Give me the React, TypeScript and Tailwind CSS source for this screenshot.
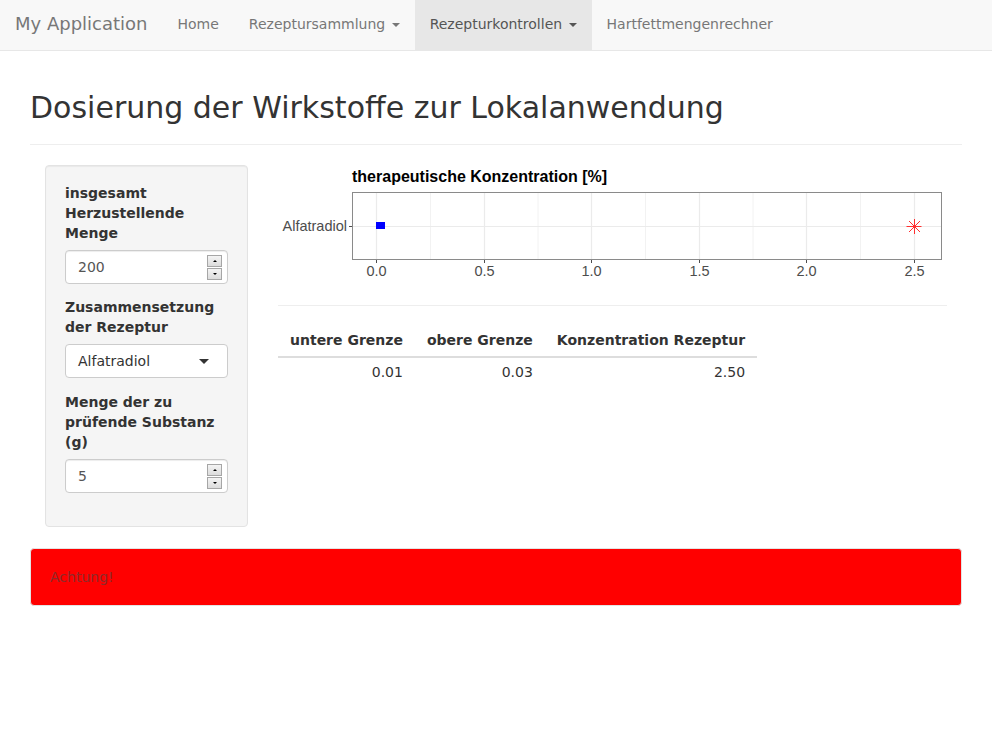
import React from "react";

function Caret() {
  return (
    <span className="inline-block w-0 h-0 ml-[2px] align-middle border-x-[4px] border-t-[4px] border-x-transparent border-t-current" />
  );
}

function Spinner() {
  return (
    <div className="absolute right-[5px] top-[4px] flex flex-col gap-[1px]">
      <div className="w-[15px] h-[12px] bg-gradient-to-b from-[#f4f4f4] to-[#dcdcdc] border border-[#a6a6a6] flex items-center justify-center">
        <span className="w-0 h-0 border-x-[2px] border-b-[2px] border-x-transparent border-b-black" />
      </div>
      <div className="w-[15px] h-[12px] bg-gradient-to-b from-[#f4f4f4] to-[#dcdcdc] border border-[#a6a6a6] flex items-center justify-center">
        <span className="w-0 h-0 border-x-[2px] border-t-[2px] border-x-transparent border-t-black" />
      </div>
    </div>
  );
}

function NumInput({ value }: { value: string }) {
  return (
    <div className="relative h-[34px] w-full bg-white border border-[#ccc] rounded-[4px] shadow-[inset_0_1px_1px_rgba(0,0,0,0.075)] px-[12px] flex items-center text-[#555]">
      {value}
      <Spinner />
    </div>
  );
}

function Chart() {
  const majors = [98, 206, 313, 421, 528, 636];
  const minors = [152, 259.5, 367, 474.5, 582];
  const labels = ["0.0", "0.5", "1.0", "1.5", "2.0", "2.5"];
  const font = "'Liberation Sans', Arial, sans-serif";
  return (
    <svg width="669" height="120" viewBox="0 0 669 120" className="block">
      <text x="74" y="17" fontFamily={font} fontWeight="bold" fontSize="16" fill="#000">
        therapeutische Konzentration [%]
      </text>
      <rect x="74.5" y="27.5" width="589" height="67" fill="#fff" />
      {minors.map((x) => (
        <line key={"m" + x} x1={x + 0.5} x2={x + 0.5} y1="28" y2="94" stroke="#f2f2f2" strokeWidth="1" />
      ))}
      {majors.map((x) => (
        <line key={"M" + x} x1={x + 0.5} x2={x + 0.5} y1="28" y2="94" stroke="#ebebeb" strokeWidth="1.2" />
      ))}
      <line x1="75" x2="663" y1="61.5" y2="61.5" stroke="#ebebeb" strokeWidth="1.2" />
      <rect x="98" y="57" width="9" height="7" fill="#0000ff" />
      <g stroke="#ff3030" strokeWidth="1">
        <line x1="628.5" x2="643.5" y1="61.5" y2="61.5" />
        <line x1="636.5" x2="636.5" y1="54" y2="69" />
        <line x1="631" x2="642" y1="56" y2="67" />
        <line x1="631" x2="642" y1="67" y2="56" />
      </g>
      <rect x="74.5" y="27.5" width="589" height="67" fill="none" stroke="#8a8a8a" strokeWidth="1" />
      <line x1="71" x2="74" y1="61.5" y2="61.5" stroke="#4d4d4d" strokeWidth="1" />
      <text x="69" y="66" textAnchor="end" fontFamily={font} fontSize="14.5" fill="#4d4d4d">
        Alfatradiol
      </text>
      {majors.map((x, i) => (
        <g key={"t" + x}>
          <line x1={x + 0.5} x2={x + 0.5} y1="95" y2="98" stroke="#4d4d4d" strokeWidth="1" />
          <text x={x + 0.5} y="110.5" textAnchor="middle" fontFamily={font} fontSize="14.5" fill="#4d4d4d">
            {labels[i]}
          </text>
        </g>
      ))}
    </svg>
  );
}

export default function App() {
  return (
    <div className="min-h-screen bg-white font-['DejaVu_Sans',sans-serif] text-[14px] leading-[20px] text-[#333]">
      <nav className="h-[51px] bg-[#f8f8f8] border-b border-[#e7e7e7] flex">
        <a className="block px-[15px] pt-[14px] pb-[16px] text-[18px] leading-[20px] text-[#777]">My Application</a>
        <a className="block px-[15px] pt-[14px] pb-[16px] text-[#777]">Home</a>
        <a className="block px-[15px] pt-[14px] pb-[16px] text-[#777]">
          Rezeptursammlung <Caret />
        </a>
        <a className="block px-[15px] pt-[14px] pb-[16px] text-[#555] bg-[#e7e7e7]">
          Rezepturkontrollen <Caret />
        </a>
        <a className="block px-[15px] pt-[14px] pb-[16px] text-[#777]">Hartfettmengenrechner</a>
      </nav>

      <div className="px-[30px] pt-[40px]">
        <h2 className="text-[30px] leading-[33px] font-normal text-[#333]">
          Dosierung der Wirkstoffe zur Lokalanwendung
        </h2>
        <div className="mt-[20px] border-t border-[#eee]" />

        <div className="flex gap-[30px] mt-[20px]">
          <div className="ml-[15px] w-[203px] shrink-0 bg-[#f5f5f5] border border-[#e3e3e3] rounded-[4px] shadow-[inset_0_1px_1px_rgba(0,0,0,0.05)] pt-[17px] px-[19px] pb-[20px]">
            <div className="mb-[13px]">
              <label className="block font-bold mb-[7px]">insgesamt Herzustellende Menge</label>
              <NumInput value="200" />
            </div>
            <div className="mb-[14px]">
              <label className="block font-bold mb-[7px]">Zusammensetzung der Rezeptur</label>
              <div className="h-[34px] w-full bg-white border border-[#ccc] rounded-[4px] pl-[12px] pr-[18px] flex items-center justify-between text-[#333]">
                <span>Alfatradiol</span>
                <span className="w-0 h-0 border-x-[5px] border-t-[5px] border-x-transparent border-t-[#333]" />
              </div>
            </div>
            <div className="mb-[13px]">
              <label className="block font-bold mb-[7px]">Menge der zu prüfende Substanz (g)</label>
              <NumInput value="5" />
            </div>
          </div>

          <div className="w-[669px] shrink-0">
            <Chart />
            <div className="mt-[20px] border-t border-[#eee]" />
            <table className="mt-[18px] border-collapse">
              <thead>
                <tr className="border-b-2 border-[#ddd]">
                  <th className="px-[12px] pt-[6px] pb-[6px] text-right font-bold">untere Grenze</th>
                  <th className="px-[12px] pt-[6px] pb-[6px] text-right font-bold">obere Grenze</th>
                  <th className="px-[12px] pt-[6px] pb-[6px] text-right font-bold">Konzentration Rezeptur</th>
                </tr>
              </thead>
              <tbody>
                <tr>
                  <td className="px-[12px] py-[4px] text-right">0.01</td>
                  <td className="px-[12px] py-[4px] text-right">0.03</td>
                  <td className="px-[12px] py-[4px] text-right">2.50</td>
                </tr>
              </tbody>
            </table>
          </div>
        </div>

        <div className="mt-[21px] bg-[#ff0000] border border-[#e3e3e3] rounded-[4px] px-[19px] py-[18px] text-[#8e2a2a]">
          Achtung!
        </div>
      </div>
    </div>
  );
}
